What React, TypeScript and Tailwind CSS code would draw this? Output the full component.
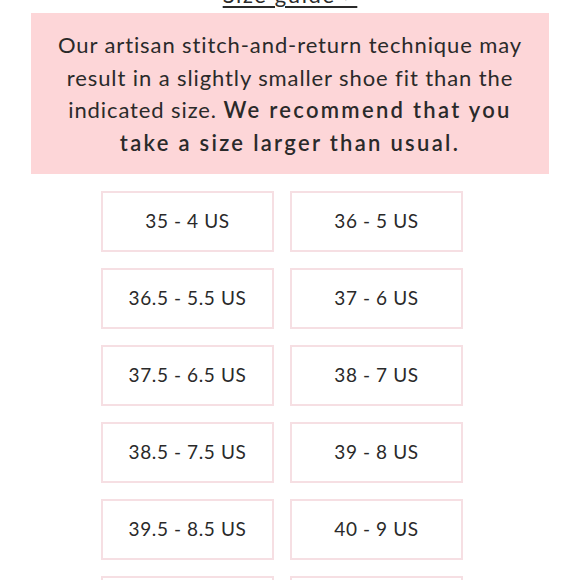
import React from "react";

const sizes = [
  ["35 - 4 US", "36 - 5 US"],
  ["36.5 - 5.5 US", "37 - 6 US"],
  ["37.5 - 6.5 US", "38 - 7 US"],
  ["38.5 - 7.5 US", "39 - 8 US"],
  ["39.5 - 8.5 US", "40 - 9 US"],
  ["40.5 - 9.5 US", "41 - 10 US"],
];

export default function App() {
  return (
    <div className="w-[580px] h-[580px] overflow-hidden bg-white text-[#2a2a2a]" style={{ fontFamily: "Lato, 'Noto Sans', sans-serif" }}>
      <div className="flex justify-center -mt-[17px] h-[30px]">
        <span className="text-[22px] leading-[24px] tracking-[1.6px] underline underline-offset-[3px] decoration-[1.5px]">Size guide &gt;</span>
      </div>
      <div className="mx-[31px] bg-[#fdd6d8] pt-[16px] pb-[15px] text-center text-[22px] leading-[32.5px] tracking-[0.9px] whitespace-nowrap">
        Our artisan stitch-and-return technique may
        <br />
        result in a slightly smaller shoe fit than the
        <br />
        indicated size. <span className="font-semibold tracking-[2.3px]">We recommend that you</span>
        <br />
        <span className="font-semibold tracking-[2.3px]">take a size larger than usual.</span>
      </div>
      <div className="ml-[101px] mt-[17px] w-[362px] grid grid-cols-2 gap-x-[16px] gap-y-[16px]">
        {sizes.flat().map((s) => (
          <div key={s} className="h-[61px] border-2 border-[#f6dfe3] flex items-center justify-center text-[19px] tracking-[0.6px]">
            {s}
          </div>
        ))}
      </div>
    </div>
  );
}
